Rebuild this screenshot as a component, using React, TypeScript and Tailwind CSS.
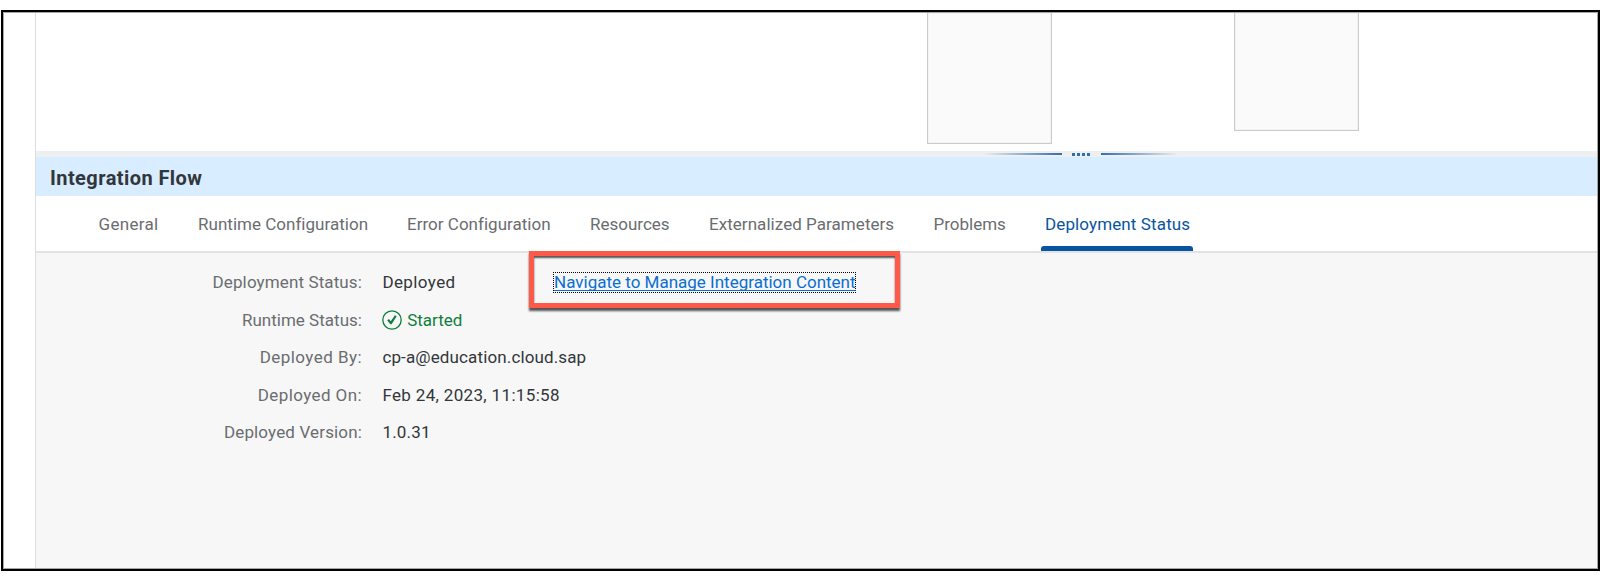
import React from "react";

type Tab = { label: string; slot: string; tracking: string; active?: boolean };

const tabs: Tab[] = [
  { label: "General", slot: "w-[99.5px]", tracking: "tracking-[0.3px]" },
  { label: "Runtime Configuration", slot: "w-[209px]", tracking: "tracking-[0.02px]" },
  { label: "Error Configuration", slot: "w-[183px]", tracking: "tracking-[0.02px]" },
  { label: "Resources", slot: "w-[119px]", tracking: "tracking-normal" },
  { label: "Externalized Parameters", slot: "w-[224.5px]", tracking: "tracking-[0.05px]" },
  { label: "Problems", slot: "w-[111.5px]", tracking: "tracking-normal" },
  { label: "Deployment Status", slot: "w-[146px]", tracking: "tracking-[0.12px]", active: true },
];

function TabBar() {
  return (
    <nav className="flex h-[57px] border-b-2 border-[#e2e3e4] bg-white pl-[62.5px] text-[17px] text-[#6a6d70]">
      {tabs.map((tab) => (
        <div key={tab.label} className={`relative h-[55px] shrink-0 leading-[57px] whitespace-nowrap ${tab.slot} ${tab.tracking}`}>
          <span className={tab.active ? "text-[#0854a0]" : ""}>{tab.label}</span>
          {tab.active && <div className="absolute bottom-0 -left-[4px] h-[5px] w-[152px] rounded-t-[3px] bg-[#0854a0]" />}
        </div>
      ))}
    </nav>
  );
}

function Splitter() {
  return (
    <div className="flex h-[6px] items-center bg-[#edeff0] pl-[948px]">
      <div className="h-[2px] w-[78px] bg-gradient-to-r from-transparent to-[#2f6fb0]" />
      <div className="ml-[10px] flex gap-[2px]">
        {[0, 1, 2, 3].map((i) => (
          <div key={i} className="h-[3px] w-[3px] bg-[#2f6fb0]" />
        ))}
      </div>
      <div className="ml-[11px] h-[2px] w-[77px] bg-gradient-to-l from-transparent to-[#2f6fb0]" />
    </div>
  );
}

type RowProps = { label: string; labelClass: string; valueClass?: string; children: React.ReactNode };

function Row({ label, labelClass, valueClass = "", children }: RowProps) {
  return (
    <div className="flex h-[37.5px] items-center whitespace-nowrap">
      <div className={`w-[326px] shrink-0 text-right text-[#6a6d70] ${labelClass}`}>{label}</div>
      <div className={`ml-[20.4px] flex items-center text-[#32363a] ${valueClass}`}>{children}</div>
    </div>
  );
}

export default function App() {
  return (
    <div className="h-[581px] w-[1600px] overflow-hidden bg-white pt-[10px] pl-px font-['Roboto','Liberation_Sans',sans-serif]">
      <div className="h-[561px] w-[1599px] border-2 border-black">
        <div className="flex h-full border border-[#a3a6a4] bg-white">
          <div className="w-[32px] shrink-0 border-r border-[#dcdddd]" />
          <div className="flex min-w-0 flex-1 flex-col">
            <div className="flex h-[138px] shrink-0 items-start pl-[891px]">
              <div className="h-[130.5px] w-[125px] border border-t-0 border-[#cbcbcb] bg-[#fafafa] shadow-[inset_0_0_1px_#bbb]" />
              <div className="ml-[182px] h-[118px] w-[125px] border border-t-0 border-[#cbcbcb] bg-[#fafafa] shadow-[inset_0_0_1px_#bbb]" />
            </div>
            <Splitter />
            <h1 className="h-[39px] shrink-0 bg-[#d8edff] pl-[14px] text-[20px] leading-[42px] font-bold tracking-[0.43px] text-[#32363a]">
              Integration Flow
            </h1>
            <TabBar />
            <main className="flex-1 bg-[#f7f7f7] pt-[11px] text-[17px]">
              <Row label="Deployment Status:" labelClass="tracking-[0.12px]">
                <span className="w-[170.7px] tracking-[0.4px]">Deployed</span>
                <div className="relative">
                  <a className="block h-[21px] w-[303px] border border-dotted border-black leading-[19px] text-[#0a6ed1] underline decoration-1 underline-offset-[2px] [text-decoration-skip-ink:none]">
                    Navigate to Manage Integration Content
                  </a>
                  <div className="absolute -top-[21px] -left-[24px] h-[57px] w-[371px] border-[5.5px] border-[#ff5a49] shadow-[0_3px_2px_#555,inset_0_2px_2px_#555]" />
                </div>
              </Row>
              <Row label="Runtime Status:" labelClass="pt-px tracking-[0.02px]">
                <svg className="mr-[5.4px] -ml-[0.6px]" width="20" height="20" viewBox="0 0 20 20" fill="none" stroke="#107e3e">
                  <circle cx="10" cy="10" r="9.2" strokeWidth="1.3" />
                  <path d="M5.2 10.2 6.9 9 8.8 11.3 12.9 5.2 14.7 6.3 9.6 14.2H8.3Z" fill="#107e3e" stroke="none" />
                </svg>
                <span className="pt-px text-[#107e3e]">Started</span>
              </Row>
              <Row label="Deployed By:" labelClass="tracking-[0.45px]" valueClass="tracking-[0.13px]">cp-a@education.cloud.sap</Row>
              <Row label="Deployed On:" labelClass="pt-px tracking-[0.4px]" valueClass="pt-px tracking-[0.34px]">Feb 24, 2023, 11:15:58</Row>
              <Row label="Deployed Version:" labelClass="tracking-[0.15px]" valueClass="tracking-[0.2px]">1.0.31</Row>
            </main>
          </div>
        </div>
      </div>
    </div>
  );
}
